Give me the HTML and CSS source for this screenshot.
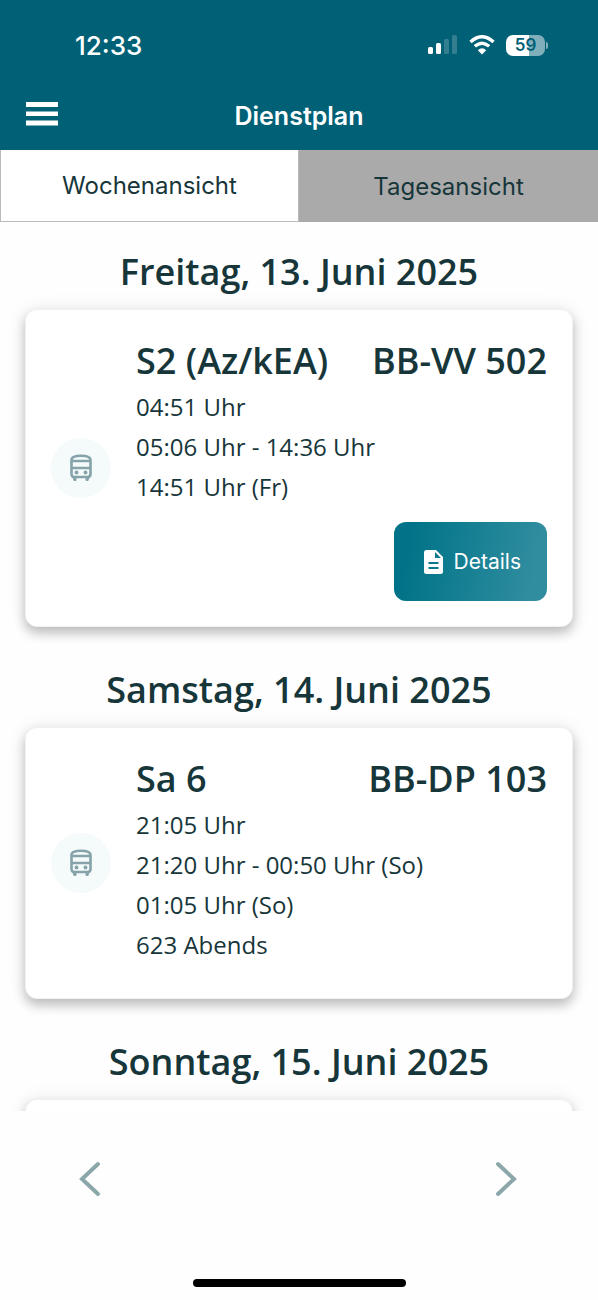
FILE: index.html
```html
<!DOCTYPE html>
<html lang="de">
<head>
<meta charset="utf-8">
<meta name="viewport" content="width=device-width, initial-scale=1">
<title>Dienstplan</title>
<link rel="stylesheet" href="styles.css">
</head>
<body>
<svg class="sprite" aria-hidden="true">
  <symbol id="bus" viewBox="0 0 24 28">
    <path d="M2.500 20V6Q2.500 1.800 12 1.800T21.500 6V20Q21.500 23 18.500 23H5.500Q2.500 23 2.500 20Z" fill="none" stroke="currentColor" stroke-width="2.600"/>
    <path d="M3 7H21M3 14H21" fill="none" stroke="currentColor" stroke-width="2.400"/>
    <path d="M3 22H7.500V26Q7.500 27 6.500 27H5.500Q4.500 27 4.300 26ZM16.500 22H21L19.700 26Q19.500 27 18.500 27H17.500Q16.500 27 16.500 26Z" fill="currentColor"/>
    <circle cx="7.500" cy="18.500" r="1.900" fill="currentColor"/>
    <circle cx="16.500" cy="18.500" r="1.900" fill="currentColor"/>
  </symbol>
</svg>
<div class="app">
  <header class="header">
    <div class="status">
      <time class="clock">12:33</time>
      <div class="indicators">
        <svg class="signal" viewBox="0 0 30 20" aria-label="Mobilfunk">
          <rect x="0" y="12" width="5" height="7" rx="1.500"/>
          <rect x="8" y="8" width="5" height="11" rx="1.500"/>
          <rect x="16" y="4" width="5" height="15" rx="1.500" opacity=".2"/>
          <rect x="24" y="0" width="5" height="19" rx="1.500" opacity=".2"/>
        </svg>
        <svg class="wifi" viewBox="0 0 26 20" aria-label="WLAN">
          <path d="M1.500 7Q13 -3.500 24.500 7M5.800 11.300Q13 5 20.200 11.300" fill="none" stroke="currentColor" stroke-width="3.400"/>
          <path d="M13 19.500L8.800 15.200Q13 11.500 17.200 15.200Z"/>
        </svg>
        <div class="battery"><span class="level">59</span><span class="cap"></span></div>
      </div>
    </div>
    <div class="titlebar">
      <button class="menu" type="button" aria-label="Menü">
        <svg viewBox="0 0 32 24"><path d="M0 0H32V5H0ZM0 9.500H32V14H0ZM0 18.500H32V23.500H0Z"/></svg>
      </button>
      <h1 class="title">Dienstplan</h1>
    </div>
  </header>
  <nav class="tabs">
    <button class="tab active" type="button">Wochenansicht</button>
    <button class="tab" type="button">Tagesansicht</button>
  </nav>
  <main class="days">
    <section class="day">
      <h2 class="date">Freitag, 13. Juni 2025</h2>
      <article class="card">
        <span class="badge"><svg class="bus"><use href="#bus"/></svg></span>
        <div class="shift">
          <div class="names"><h3>S2 (Az/kEA)</h3><h3>BB-VV 502</h3></div>
          <div class="times"><p>04:51 Uhr</p><p>05:06 Uhr - 14:36 Uhr</p><p>14:51 Uhr (Fr)</p></div>
          <button class="details" type="button">
            <svg class="doc" viewBox="0 0 19 24"><path fill-rule="evenodd" d="M2.500 0H12L19 7V21.500Q19 24 16.500 24H2.500Q0 24 0 21.500V2.500Q0 0 2.500 0ZM11 2V8H17ZM4.500 12V14H14.500V12ZM4.500 17V19H14.500V17Z"/></svg>
            Details
          </button>
        </div>
      </article>
    </section>
    <section class="day">
      <h2 class="date">Samstag, 14. Juni 2025</h2>
      <article class="card">
        <span class="badge"><svg class="bus"><use href="#bus"/></svg></span>
        <div class="shift">
          <div class="names"><h3>Sa 6</h3><h3>BB-DP 103</h3></div>
          <div class="times"><p>21:05 Uhr</p><p>21:20 Uhr - 00:50 Uhr (So)</p><p>01:05 Uhr (So)</p><p>623 Abends</p></div>
        </div>
      </article>
    </section>
    <section class="day">
      <h2 class="date">Sonntag, 15. Juni 2025</h2>
      <article class="card"></article>
    </section>
  </main>
  <footer class="footer">
    <div class="pager">
      <button class="arrow" type="button" aria-label="Vorherige Woche"><svg viewBox="0 0 24 36"><path d="M20 3L4 18L20 33"/></svg></button>
      <button class="arrow" type="button" aria-label="Nächste Woche"><svg viewBox="0 0 24 36"><path d="M4 3L20 18L4 33"/></svg></button>
    </div>
    <div class="home"></div>
  </footer>
</div>
</body>
</html>
```
FILE: styles.css
```css
* { box-sizing: border-box; }
body { margin: 0; background: #fefefe; color: #17363a; font-family: "Open Sans", sans-serif; }
h1, h2, h3, p { margin: 0; }
button { border: 0; padding: 0; margin: 0; background: none; color: inherit; font: inherit; cursor: pointer; }
svg { display: block; fill: currentColor; }
.sprite { display: none; }
.app { display: flex; flex-direction: column; height: 100vh; }

.header { flex: none; background: #006075; color: #fff; font-family: Inter, sans-serif; }
.status { display: flex; justify-content: space-between; align-items: center; height: 90px; padding: 0 53px 0 75px; }
.clock { font-size: 26px; font-weight: 500; }
.indicators { display: flex; align-items: center; gap: 11px; }
.signal { width: 30px; height: 20px; }
.wifi { width: 26px; height: 20px; }
.battery { position: relative; width: 39px; height: 21px; border-radius: 7px; background: linear-gradient(90deg, #fff 59%, #80afba 59%); color: #006075; text-align: center; }
.level { display: block; font-size: 17px; line-height: 21px; font-weight: 600; }
.cap { position: absolute; left: 40px; top: 7px; width: 2px; height: 7px; border-radius: 0 2px 2px 0; background: #80afba; }
.titlebar { display: grid; grid-template-columns: 32px 1fr 32px; align-items: center; height: 60px; padding: 0 26px 13px; }
.menu svg { width: 32px; height: 24px; }
.title { padding-top: 4px; font-size: 25px; line-height: 32px; font-weight: 600; text-align: center; }

.tabs { flex: none; display: grid; grid-template-columns: 1fr 1fr; height: 72px; background: #aaa; font-family: Inter, sans-serif; font-size: 24px; }
.tab.active { background: #fff; border: 1px solid #bbb; border-top: 0; }

.days { flex: 1; min-height: 0; overflow: hidden; padding: 0 25px; }
.day { padding-bottom: 13px; }
.date { height: 87px; padding-top: 23px; font-size: 36px; line-height: 54px; font-weight: 600; text-align: center; }
.card { display: flex; align-items: center; gap: 25px; min-height: 80px; padding: 25px; border: 1px solid #f0f1f1; border-radius: 12px; background: #fff; box-shadow: 0 6px 12px rgba(0, 0, 0, .24), 0 0 20px rgba(0, 0, 0, .07); }
.badge { flex: none; display: grid; place-items: center; width: 60px; height: 60px; border-radius: 50%; background: #f5fafb; color: #85a3a9; }
.bus { width: 24px; height: 28px; }
.shift { flex: 1; display: flex; flex-direction: column; }
.names { display: flex; justify-content: space-between; }
.names h3 { font-size: 36px; line-height: 52px; font-weight: 600; white-space: nowrap; }
.times { padding-bottom: 8px; font-size: 24px; line-height: 40px; }
.details { align-self: flex-end; display: flex; align-items: center; gap: 11px; height: 79px; margin-top: 7px; padding: 0 26px 0 30px; border-radius: 12px; background: linear-gradient(100deg, #007388 10%, #308d9f 90%); color: #fff; font-family: Inter, sans-serif; font-size: 21px; }
.doc { width: 19px; height: 24px; }

.footer { flex: none; display: flex; flex-direction: column; justify-content: space-between; align-items: center; height: 189px; padding: 48px 0 13px; }
.pager { display: flex; justify-content: space-between; width: 100%; padding: 0 80px 0 78px; }
.arrow svg { width: 24px; height: 40px; fill: none; stroke: #8ba7aa; stroke-width: 4; stroke-linecap: round; }
.home { width: 213px; height: 8px; border-radius: 4px; background: #000; }
```
